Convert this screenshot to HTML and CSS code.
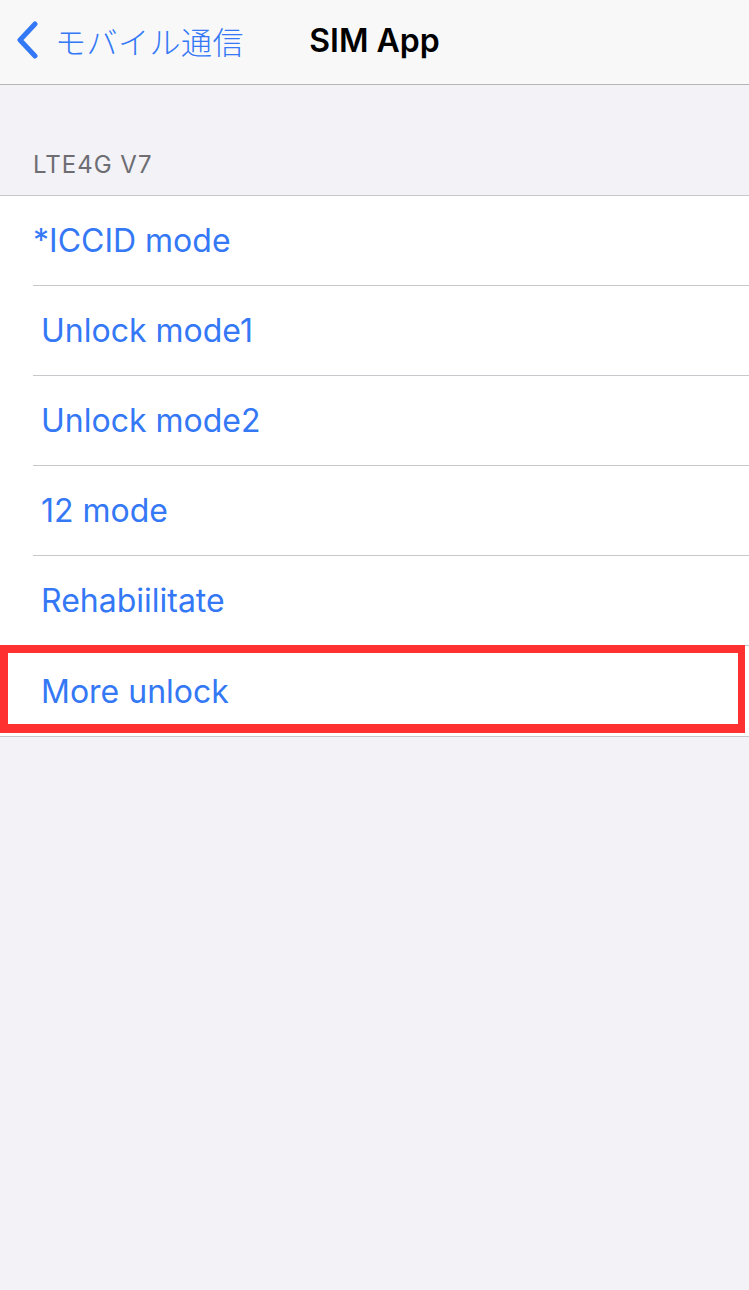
FILE: index.html
```html
<!DOCTYPE html>
<html lang="ja">
<head>
  <meta charset="UTF-8" />
  <meta name="viewport" content="width=device-width, initial-scale=1.0"/>
  <title>SIM App</title>
  <link rel="stylesheet" href="styles.css">
</head>
<body>

  <!-- Navigation bar -->
  <header class="navbar">
    <a class="back">
      <svg class="chevron" width="24" height="38" viewBox="0 0 24 38">
        <path d="M20 3 L5 19 L20 35" fill="none" stroke="#3478f6" stroke-width="5" stroke-linecap="round" stroke-linejoin="round"/>
      </svg>
      <span>モバイル通信</span>
    </a>
    <h1>SIM App</h1>
  </header>

  <!-- Menu -->
  <div class="section-title">LTE4G V7</div>
  <ul class="menu">
    <li><span>*ICCID mode</span></li>
    <li><span class="indent">Unlock mode1</span></li>
    <li><span class="indent">Unlock mode2</span></li>
    <li><span class="indent">12 mode</span></li>
    <li><span class="indent">Rehabiilitate</span></li>
    <li class="marked"><span class="indent">More unlock</span></li>
  </ul>

</body>
</html>
```

FILE: styles.css
```css
/* General */
body {
  font-family: Inter, "Noto Sans CJK JP", sans-serif;
  margin: 0; padding: 0;
  background-color: #f2f2f7;
  height: 1290px;
}

/* Navigation bar */
.navbar {
  height: 85px;
  background: #f8f8f8;
  border-bottom: 1px solid #b5b5b8;
  box-sizing: border-box;
  position: relative;
  display: flex;
  align-items: center;
}

.back {
  display: flex;
  align-items: center;
  color: #3478f6;
  font-size: 31px;
  padding-left: 15px;
  gap: 16px;
  margin-top: -4px;
}

.back span {
  font-family: "Noto Sans CJK JP", sans-serif;
  font-weight: 300;
  letter-spacing: 0.5px;
}

.navbar h1 {
  position: absolute;
  left: 0; right: 0;
  text-align: center;
  margin: 0;
  font-size: 32px;
  font-weight: 600;
  color: #000;
  pointer-events: none;
  margin-top: -4px;
}

/* Section header */
.section-title {
  padding: 65px 0 0 33px;
  height: 45px;
  font-size: 24px;
  color: #6d6d72;
  letter-spacing: 1px;
  line-height: 30px;
  border-bottom: 1px solid #c8c7cc;
  box-sizing: content-box;
}

/* Menu list */
.menu {
  list-style: none;
  margin: 0; padding: 0;
  background: #fff;
  border-bottom: 1px solid #c8c7cc;
}

.menu li {
  height: 90px;
  margin-left: 33px;
  border-bottom: 1px solid #c8c7cc;
  box-sizing: border-box;
  display: flex;
  align-items: center;
  font-size: 32px;
  color: #3478f6;
  position: relative;
}

.menu li:last-child {
  border-bottom: none;
  margin-left: 0;
  padding-left: 33px;
}

.menu .indent {
  padding-left: 8px;
}

/* Red highlight around a row */
.menu li.marked::after {
  content: "";
  position: absolute;
  left: 0; top: -1px;
  width: 745px; height: 88px;
  border: 8px solid #ff3030;
  border-bottom-width: 9px;
  border-right-width: 7px;
  box-sizing: border-box;
}
```
